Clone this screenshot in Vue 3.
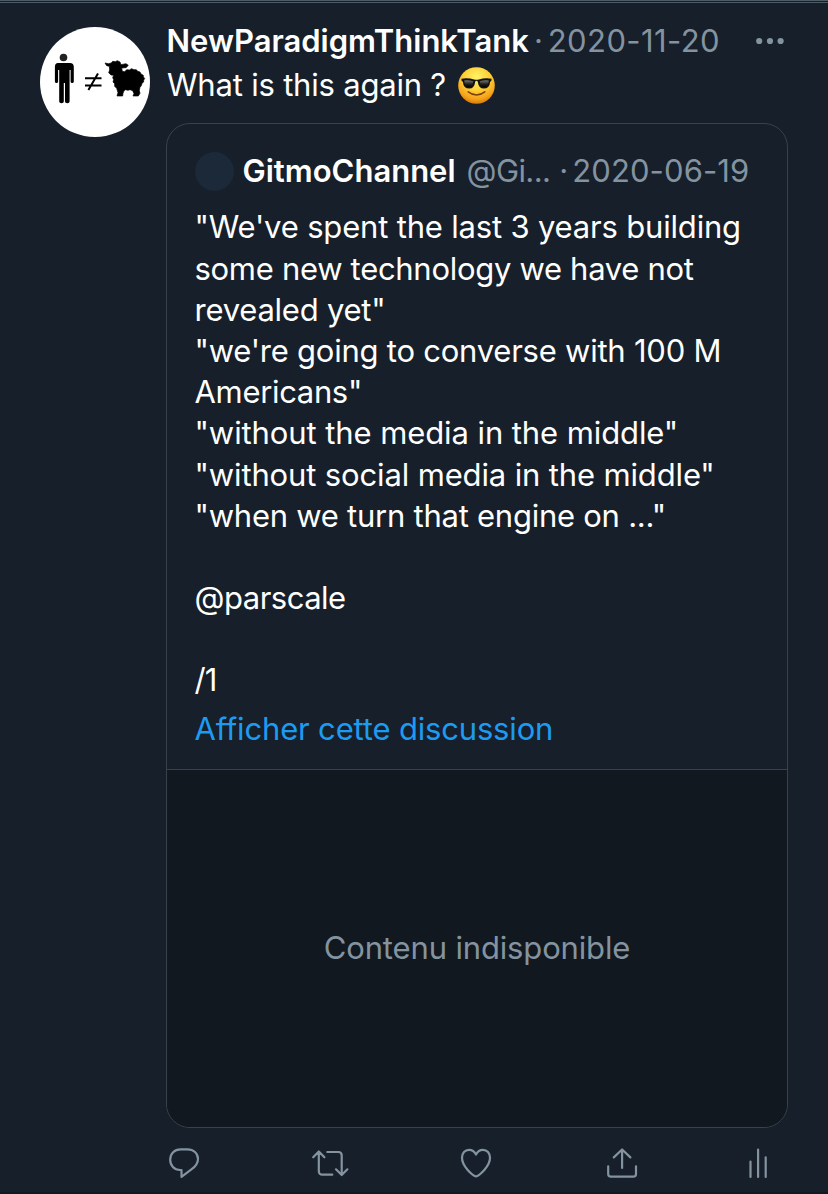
<template>
  <article class="tweet">
    <!-- Avatar -->
    <svg class="avatar" viewBox="0 0 110 110">
      <circle cx="55" cy="55" r="55" fill="#fff" />
      <circle cx="23.5" cy="30.5" r="3.8" fill="#222" />
      <path
        d="M17.500 36h12.400q3.900 0 3.900 4v14.500q0 1.500-1.600 1.500t-1.600-1.500V43h-1v31.500q0 1.700-2.300 1.700t-2.300-1.700V56h-1.200v18.500q0 1.700-2.300 1.700t-2.300-1.700V43h-1.100v11.500q0 1.500-1.600 1.500t-1.600-1.500V40q0-4 3.100-4z"
        fill="#000"
      />
      <path d="M45 51.300h16.500M45 58.500h16.500M58 46.500l-9.600 16.600" fill="none" stroke="#000" stroke-width="2" />
      <g transform="translate(60 23) scale(.3333)">
        <path
          d="M15 39L25 41L34 39L38 34L46 35L52 32L60 36L63 44L78 41L85 46L78 53L65 54L67 64L74 65L80 59L88 60L95 56L102 59L109 59L113 64L120 66L123 72L130 76L130 81L134 85L131 91L131 96L126 100L124 107L120 112L118 121L120 130L115 138L99 138L102 131L98 122L90 119L84 121L77 119L72 122L69 130L68 138L51 138L54 128L50 115L44 109L44 101L39 96L41 89L38 83L41 76L33 75L26 68L29 60L28 49L20 47Z"
          fill="#000"
          stroke="#000"
          stroke-width="2"
          stroke-linejoin="round"
        />
      </g>
    </svg>

    <div class="content">
      <header class="tweet-header">
        <span class="name">NewParadigmThinkTank</span>
        <span class="dot">·</span>
        <time class="date">2020-11-20</time>
        <svg class="more" viewBox="0 0 28 8">
          <circle cx="3.2" cy="4" r="3.1" />
          <circle cx="14" cy="4" r="3.1" />
          <circle cx="24.6" cy="4" r="3.1" />
        </svg>
      </header>

      <p class="tweet-text">
        <span>What is this again ?</span>
        <svg class="emoji" viewBox="0 0 38 38">
          <defs>
            <radialGradient id="face" cx="50%" cy="28%" r="72%">
              <stop offset="0" stop-color="#fff36a" />
              <stop offset="0.5" stop-color="#fdcf35" />
              <stop offset="0.82" stop-color="#f5a21b" />
              <stop offset="1" stop-color="#d77a0c" />
            </radialGradient>
            <linearGradient id="lens" x1="0" y1="0" x2="0" y2="1">
              <stop offset="0" stop-color="#777" />
              <stop offset="0.55" stop-color="#222" />
              <stop offset="1" stop-color="#000" />
            </linearGradient>
          </defs>
          <circle cx="19" cy="19" r="18.8" fill="url(#face)" />
          <path d="M10.500 25.500q8.500 6.500 17 0" fill="none" stroke="#7b3f08" stroke-width="1.600" stroke-linecap="round" />
          <path
            d="M3.500 12q7-1 13 .8 2.500.6 5 0 6-1.800 13-.8l-.3 2.400-1.200.7q-.5 7-6.700 7-5 0-6-7-.3-1.100-1.300-1.100t-1.300 1.100q-1 7-6 7-6.200 0-6.700-7l-1.200-.7z"
            fill="#111"
          />
          <path d="M6.300 13.800q4.500-.6 9.500.8-1 6-4.300 6-4.700 0-5.200-6.800zM31.700 13.800q-4.500-.6-9.500.8 1 6 4.300 6 4.700 0 5.200-6.800z" fill="url(#lens)" />
        </svg>
      </p>

      <section class="quote">
        <div class="quote-body">
          <header class="quote-header">
            <span class="quote-avatar"></span>
            <span class="name">GitmoChannel</span>
            <span class="handle">@Gi...</span>
            <span class="dot">·</span>
            <time class="date">2020-06-19</time>
          </header>
          <div class="quote-text">
            <p v-for="(line, i) in lines" :key="i" :style="{ letterSpacing: line.spacing + 'px' }">{{ line.text }}</p>
          </div>
          <a class="thread-link">Afficher cette discussion</a>
        </div>
        <div class="unavailable">Contenu indisponible</div>
      </section>

      <footer class="actions">
        <svg class="icon" viewBox="0 0 36 32">
          <path d="M14.500 1.300h7c6 0 10.500 4 10.500 9.700 0 4.500-2.300 7.300-6.300 10.200L15.500 28.800V22h-1.500C8.200 22 4.200 17.500 4.200 11.700 4.200 5.500 8.500 1.300 14.500 1.300z" />
        </svg>
        <svg class="icon" viewBox="0 0 36 32">
          <path d="M1.200 9.300l5.600-5.800 5.600 5.800M6.800 4v19q0 3.700 3.700 3.700h9.800M15.300 4h11q3.400 0 3.400 3.400v19.100M24 21.300l5.700 5.700 5.700-5.700" />
        </svg>
        <svg class="icon" viewBox="0 0 36 32">
          <path d="M18 28.500C14.500 27.500 4 18.500 4 9.800 4 5 7 1.800 11 1.800c3 0 5.500 1.700 7 4.800C19.500 3.500 22 1.800 25 1.800c4 0 7 3.200 7 8C32 18.500 21.500 27.500 18 28.500z" />
        </svg>
        <svg class="icon" viewBox="0 0 36 32">
          <path d="M4.200 18.300v7.700q0 2.700 2.700 2.700h22.400q2.700 0 2.700-2.700v-7.700M18.100 20V1.500M9.800 9.400l8.300-7.900 8.300 7.900" />
        </svg>
        <svg class="icon stats" viewBox="0 0 18 32">
          <path d="M.5 13.500v15.500M8.100 1.500V29M15.700 9.300V29" />
        </svg>
      </footer>
    </div>
  </article>
</template>

<script setup>
const lines = [
  { text: '"We\'ve spent the last 3 years building', spacing: -0.18 },
  { text: 'some new technology we have not', spacing: -0.3 },
  { text: 'revealed yet"', spacing: -0.23 },
  { text: '"we\'re going to converse with 100 M', spacing: -0.23 },
  { text: 'Americans"', spacing: -0.33 },
  { text: '"without the media in the middle"', spacing: -0.09 },
  { text: '"without social media in the middle"', spacing: -0.14 },
  { text: '"when we turn that engine on ..."', spacing: -0.25 },
  { text: '', spacing: 0 },
  { text: '@parscale', spacing: -0.5 },
  { text: '', spacing: 0 },
  { text: '/1', spacing: -0.9 }
]
</script>

<style>
body {
  margin: 0;
  background: #161f2a;
}
</style>

<style scoped>
.tweet {
  box-sizing: border-box;
  display: flex;
  width: 828px;
  height: 1194px;
  padding: 18px 40px 0;
  border-top: 3px double #4e5c67;
  border-bottom: 2px solid #111824;
  overflow: hidden;
  background: #161f2a;
  color: #fff;
  font-family: Inter, 'Liberation Sans', sans-serif;
  font-size: 31px;
  line-height: 41.2px;
}

p {
  margin: 0;
}

.avatar {
  flex: none;
  width: 110px;
  height: 110px;
  margin: 6px 16px 0 0;
}

.content {
  width: 622px;
}

.tweet-header {
  display: flex;
  align-items: center;
  height: 40px;
  padding-left: 0.5px;
  white-space: nowrap;
}

.name {
  font-weight: 600;
}

.dot,
.date,
.handle {
  color: #8493a0;
}

.tweet-header .dot {
  margin: 0 5px;
}

.tweet-header .date {
  letter-spacing: 0.4px;
}

.more {
  width: 28px;
  height: 8px;
  margin: 0 4px 0 auto;
  fill: #8493a0;
}

.tweet-text {
  display: flex;
  align-items: center;
  height: 48px;
  padding-left: 1px;
  letter-spacing: -0.2px;
}

.emoji {
  width: 37px;
  height: 37px;
  margin-left: 12px;
}

/* Quoted tweet */
.quote {
  box-sizing: border-box;
  display: flex;
  flex-direction: column;
  height: 1005px;
  margin-top: 14px;
  border: 1px solid #37424d;
  border-radius: 24px;
  overflow: hidden;
}

.quote-body {
  box-sizing: border-box;
  height: 646px;
  padding: 26px 27.5px 0;
  border-bottom: 1px solid #37424d;
}

.quote-header {
  display: flex;
  align-items: center;
  height: 42px;
  white-space: nowrap;
}

.quote-avatar {
  width: 39px;
  height: 39px;
  margin-right: 9px;
  border-radius: 50%;
  background: #1c2938;
}

.handle {
  margin-left: 11px;
  letter-spacing: -0.6px;
}

.quote-header .dot {
  margin: 0 4px 0 9px;
}

.quote-header .date {
  letter-spacing: 0.1px;
}

.quote-text {
  margin-top: 14.4px;
  white-space: nowrap;
}

.quote-text p {
  height: 41.2px;
}

.thread-link {
  display: block;
  margin-top: 7.6px;
  color: #1d9bf0;
  letter-spacing: -0.17px;
}

.unavailable {
  display: flex;
  flex: 1;
  align-items: center;
  justify-content: center;
  padding-bottom: 2px;
  background: #11181f;
  color: #8493a0;
  letter-spacing: -0.15px;
}

/* Action bar */
.actions {
  display: flex;
  gap: 110px;
  margin-top: 20px;
}

.icon {
  flex: none;
  width: 36px;
  height: 32px;
  overflow: visible;
  fill: none;
  stroke: #8493a0;
  stroke-width: 2.2;
  stroke-linecap: round;
  stroke-linejoin: round;
}

.stats {
  width: 18px;
}
</style>
